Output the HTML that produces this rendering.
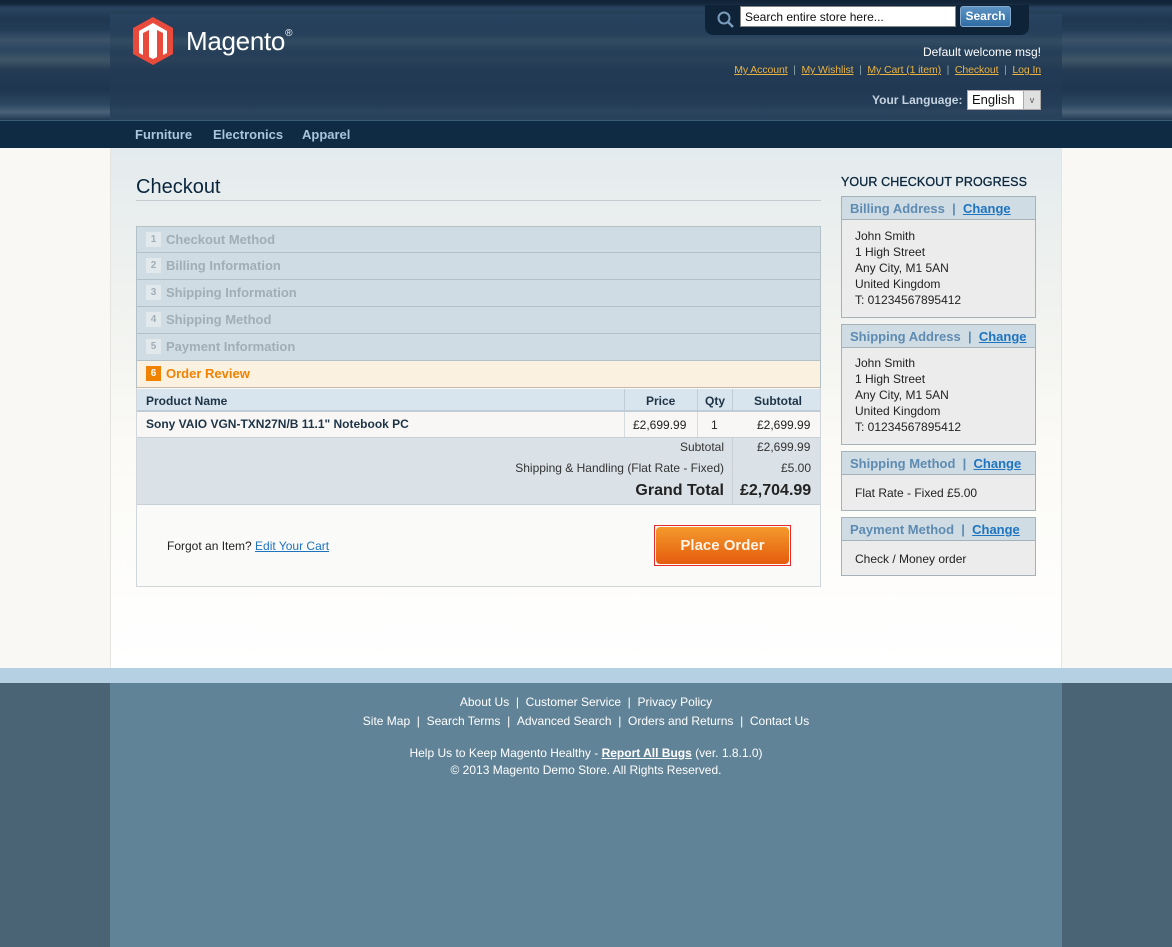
<!DOCTYPE html>
<html><head><meta charset="utf-8"><style>
*{margin:0;padding:0;box-sizing:border-box}
body{width:1172px;height:947px;position:relative;overflow:hidden;font-family:"Liberation Sans",Arial,sans-serif;font-size:12px;color:#222;background:#faf8f4}
.a{position:absolute}
#hdr{left:0;top:0;width:1172px;height:120px;background:linear-gradient(180deg,#0f2236 0,#14283d 4px,#2a4560 8px,#1f3750 20px,#243d57 30px,#3c536a 40px,#2b4560 50px,#3f5566 60px,#243b54 70px,#1e3650 90px,#2d4862 105px,#4a6379 112px,#213a53 120px)}
#hdrc{left:110px;top:14px;width:952px;height:106px;background:linear-gradient(180deg,#2b4765 0,#253f5a 20px,#2f4a60 28px,#223a54 40px,#223a54 100px,#2a4560 106px);opacity:.75}
#nav{left:0;top:120px;width:1172px;height:28px;background:#0f2a43;border-top:1px solid #3b5a78}
#nav span{position:absolute;top:6px;color:#a9c4dc;font-weight:bold;font-size:13px}
#main{left:110px;top:148px;width:952px;height:520px;background:linear-gradient(180deg,#e4ebee 0,#f0f2ef 150px,#fbfaf6 300px,#fff 520px);border-left:1px solid #e6e4e0;border-right:1px solid #e6e4e0}
.step{position:absolute;left:136px;width:685px;height:27px;background:#d0dce3;border:1px solid #b2c0c8;border-top:none;color:#a1aeb5;font-weight:bold;font-size:13px;padding:5px 0 0 29px}
.step i{position:absolute;left:9px;top:5px;width:15px;height:15px;background:#e2e9ed;color:#a1aeb5;font-style:normal;font-size:10px;text-align:center;line-height:15px}
.box{position:absolute;left:841px;width:195px;border:1px solid #a6b2ba;background:#ececec}
.box .h{height:23px;background:#d0dce3;border-bottom:1px solid #a6b2ba;color:#5d8bb2;font-weight:bold;font-size:13px;padding:4px 0 0 8px}
.box .h u{color:#1d74c0}
.box .b{padding:8px 0 0 13px;line-height:16px;color:#222}
#ftb{left:0;top:668px;width:1172px;height:15px;background:#b4d0e2}
#ft{left:0;top:683px;width:1172px;height:264px;background:#4a6475}
#ftc{left:110px;top:683px;width:952px;height:264px;background:#618397;color:#fff;text-align:center}
.tc{color:#1e3446}
</style></head><body>
<div class="a" id="hdr"></div>
<div class="a" id="hdrc"></div>
<svg class="a" style="left:133px;top:17px" width="40" height="48" viewBox="0 0 40 48"><polygon points="20,0 40,11 40,37 20,48 0,37 0,11" fill="#e84a3b"/><path d="M6 36V14L20 6L34 14V36L30 38V16L24 13V40L20 42L16 40V13L10 16V38Z" fill="#fff"/></svg>
<div class="a" style="left:186px;top:26px;color:#fff;font-size:26px;font-family:'Liberation Sans',sans-serif;letter-spacing:-.3px">Magento<sup style="font-size:10px;vertical-align:top;position:relative;top:2px">®</sup></div>
<div class="a" style="left:705px;top:5px;width:324px;height:30px;background:#0e2337;border-radius:0 0 8px 8px"></div>
<svg class="a" style="left:716px;top:10px" width="20" height="20"><circle cx="8" cy="8" r="5.5" fill="none" stroke="#7a9cbc" stroke-width="2"/><line x1="12" y1="12" x2="17" y2="17" stroke="#7a9cbc" stroke-width="2.4"/></svg>
<div class="a" style="left:740px;top:6px;width:216px;height:21px;background:#fff;border:1px solid #888;font-size:12px;padding:3px 4px;color:#111">Search entire store here...</div>
<div class="a" style="left:960px;top:6px;width:51px;height:21px;background:linear-gradient(#5d93c4,#2f6ca3);border:1px solid #86aace;border-radius:3px;color:#fff;font-weight:bold;font-size:12px;text-align:center;line-height:19px">Search</div>
<div class="a" style="right:131px;top:45px;color:#fff;font-size:12px">Default welcome msg!</div>
<div class="a" style="right:131px;top:64px;color:#e9b342;font-size:10.5px;letter-spacing:-.1px"><u>My Account</u> <span style="color:#8aa">&nbsp;|&nbsp;</span> <u>My Wishlist</u> <span style="color:#8aa">&nbsp;|&nbsp;</span> <u>My Cart (1 item)</u> <span style="color:#8aa">&nbsp;|&nbsp;</span> <u>Checkout</u> <span style="color:#8aa">&nbsp;|&nbsp;</span> <u>Log In</u></div>
<div class="a" style="left:872px;top:93px;color:#c5d3e0;font-weight:bold;font-size:12px">Your Language:</div>
<div class="a" style="left:967px;top:90px;width:74px;height:20px;background:#fff;border:1px solid #aaa;font-size:13px;padding:1px 4px;color:#111">English<span style="position:absolute;right:0;top:0;width:17px;height:18px;background:#e0e0e0;border-left:1px solid #aaa;font-size:9px;text-align:center;line-height:18px;color:#555">v</span></div>
<div class="a" id="nav"><span style="left:135px">Furniture</span><span style="left:213px">Electronics</span><span style="left:302px">Apparel</span></div>
<div class="a" id="main"></div>
<div class="a" style="left:136px;top:176px;font-size:20px;color:#0a263c">Checkout</div>
<div class="a" style="left:136px;top:200px;width:685px;height:1px;background:#c4ccd0"></div>
<div class="step" style="top:226px;border-top:1px solid #b2c0c8"><i>1</i>Checkout Method</div>
<div class="step" style="top:253px"><i>2</i>Billing Information</div>
<div class="step" style="top:280px"><i>3</i>Shipping Information</div>
<div class="step" style="top:307px"><i>4</i>Shipping Method</div>
<div class="step" style="top:334px"><i>5</i>Payment Information</div>
<div class="step" style="top:361px;background:#fbf1e1;color:#f18200;border-bottom:1px solid #c6b8a5"><i style="background:#f18200;color:#fff">6</i>Order Review</div>
<div class="a" style="left:136px;top:388px;width:685px;height:199px;border:1px solid #d0d6d9;border-top:none;background:#fafaf8"></div>
<div class="a" style="left:137px;top:389px;width:683px;height:23px;background:#d9e5ee;border-bottom:2px solid #c1cdd6"></div>
<div class="a tc" style="left:146px;top:394px;font-weight:bold">Product Name</div>
<div class="a" style="left:624px;top:389px;width:1px;height:48px;background:#c1cdd6"></div>
<div class="a" style="left:697px;top:389px;width:1px;height:48px;background:#c1cdd6"></div>
<div class="a" style="left:732px;top:389px;width:1px;height:116px;background:#c1cdd6"></div>
<div class="a tc" style="left:646px;top:394px;font-weight:bold">Price</div>
<div class="a tc" style="left:705px;top:394px;font-weight:bold">Qty</div>
<div class="a tc" style="left:754px;top:394px;font-weight:bold">Subtotal</div>
<div class="a" style="left:137px;top:412px;width:683px;height:25px;background:#f8f7f5"></div>
<div class="a" style="left:624px;top:412px;width:1px;height:25px;background:#d5dadd"></div><div class="a" style="left:697px;top:412px;width:1px;height:25px;background:#d5dadd"></div>
<div class="a tc" style="left:146px;top:417px;font-weight:bold">Sony VAIO VGN-TXN27N/B 11.1" Notebook PC</div>
<div class="a" style="left:633px;top:418px">£2,699.99</div>
<div class="a" style="left:711px;top:418px">1</div>
<div class="a" style="left:757px;top:418px">£2,699.99</div>
<div class="a" style="left:137px;top:437px;width:683px;height:68px;background:#dae2e7;border-top:1px solid #c8d0d5;border-bottom:1px solid #c8d0d5"></div>
<div class="a" style="left:732px;top:437px;width:1px;height:68px;background:#c8d0d5"></div>
<div class="a" style="right:448px;top:440px;color:#333">Subtotal</div>
<div class="a" style="left:757px;top:440px;color:#333">£2,699.99</div>
<div class="a" style="right:448px;top:461px;color:#333">Shipping &amp; Handling (Flat Rate - Fixed)</div>
<div class="a" style="left:781px;top:461px;color:#333">£5.00</div>
<div class="a" style="right:448px;top:482px;font-size:16px;font-weight:bold;color:#222">Grand Total</div>
<div class="a" style="left:740px;top:482px;font-size:16px;font-weight:bold;color:#222">£2,704.99</div>
<div class="a" style="left:167px;top:539px;color:#222">Forgot an Item? <u style="color:#1e73be">Edit Your Cart</u></div>
<div class="a" style="left:654px;top:525px;width:137px;height:41px;border:1px solid #e52b2b;padding:1px"><div style="height:37px;background:linear-gradient(#f49a2c,#e55b0e);border-radius:4px;color:#fff5e8;font-weight:bold;font-size:15px;text-align:center;line-height:37px">Place Order</div></div>
<div class="a" style="left:841px;top:175px;font-size:12.5px;color:#0a263c;letter-spacing:.1px;-webkit-text-stroke:.3px #0a263c">YOUR CHECKOUT PROGRESS</div>
<div class="box" style="top:196px;height:122px"><div class="h">Billing Address &nbsp;| &nbsp;<u>Change</u></div><div class="b">John Smith<br>1 High Street<br>Any City, M1 5AN<br>United Kingdom<br>T: 01234567895412</div></div>
<div class="box" style="top:324px;height:121px"><div class="h">Shipping Address &nbsp;| &nbsp;<u>Change</u></div><div class="b" style="padding-top:7px">John Smith<br>1 High Street<br>Any City, M1 5AN<br>United Kingdom<br>T: 01234567895412</div></div>
<div class="box" style="top:451px;height:60px"><div class="h">Shipping Method &nbsp;| &nbsp;<u>Change</u></div><div class="b" style="padding-top:10px">Flat Rate - Fixed £5.00</div></div>
<div class="box" style="top:517px;height:59px"><div class="h">Payment Method &nbsp;| &nbsp;<u>Change</u></div><div class="b" style="padding-top:10px">Check / Money order</div></div>
<div class="a" id="ftb"></div>
<div class="a" id="ft"></div>
<div class="a" id="ftc">
<div style="margin-top:12px">About Us &nbsp;| &nbsp;Customer Service &nbsp;| &nbsp;Privacy Policy</div>
<div style="margin-top:5px">Site Map &nbsp;| &nbsp;Search Terms &nbsp;| &nbsp;Advanced Search &nbsp;| &nbsp;Orders and Returns &nbsp;| &nbsp;Contact Us</div>
<div style="margin-top:18px">Help Us to Keep Magento Healthy - <b><u>Report All Bugs</u></b> (ver. 1.8.1.0)</div>
<div style="margin-top:3px">© 2013 Magento Demo Store. All Rights Reserved.</div>
</div>
</body></html>
